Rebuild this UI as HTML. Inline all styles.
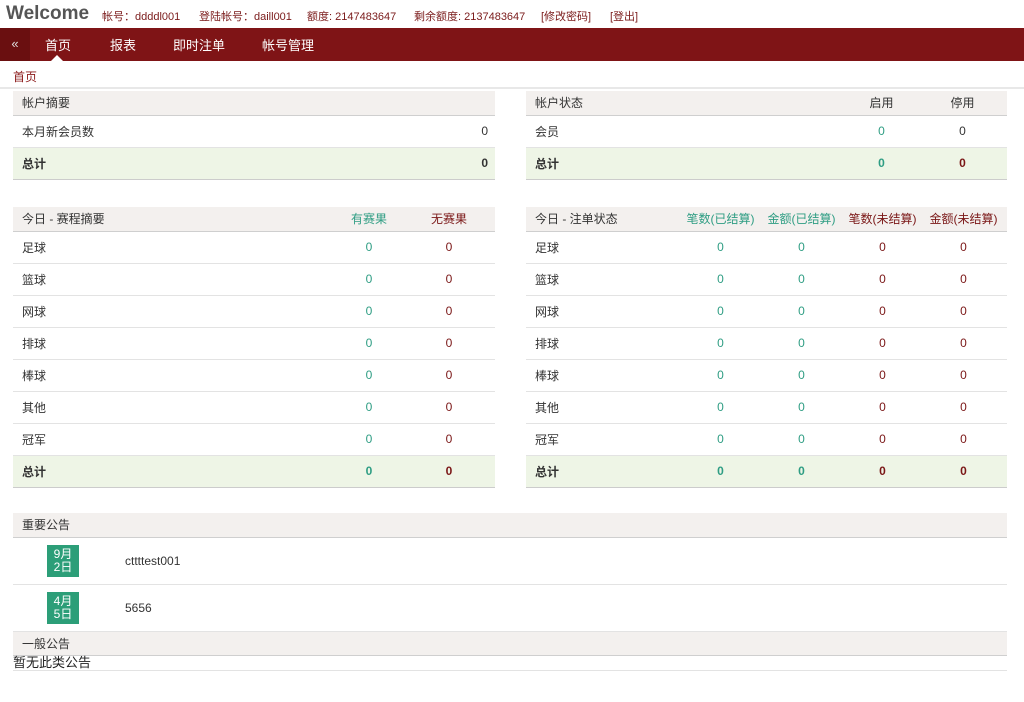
<!DOCTYPE html><html><head><meta charset="utf-8"><style>
*{margin:0;padding:0;box-sizing:border-box}
body{width:1024px;height:702px;background:#fff;font-family:"Liberation Sans","Noto Sans CJK SC",sans-serif;font-size:12px;color:#333;position:relative;overflow:hidden}
.top{position:absolute;left:0;top:0;height:28px;width:1024px}
.top b{position:absolute;left:6px;top:3px;font-size:19px;color:#555}
.top span{position:absolute;top:8px;font-size:11px;color:#7a1a1a}
.nav{position:absolute;left:0;top:28px;width:1024px;height:33px;background:#7f1416}
.nav .bk{position:absolute;left:0;top:0;width:30px;height:33px;background:#6a0f10;color:#ddd;text-align:center;line-height:31px;font-size:13px}
.nav span{position:absolute;top:7px;color:#fff;font-size:13px}
.nav .tri{position:absolute;left:51px;top:27px;border:6px solid transparent;border-bottom-color:#fff;border-top:0}
.bc{position:absolute;left:13px;top:68px;color:#8b1a1a;font-size:12px}
.bcl{position:absolute;left:0;top:87px;width:1024px;height:2px;background:#e8e8e8}
table{position:absolute;border-collapse:collapse;table-layout:fixed}
td{height:32px;border-bottom:1px solid #e3e3e3;padding:0;font-size:12px;color:#333}
td:first-child{padding-left:9px}
tr.h td{height:24px;background:#f3f0ee;border-bottom:1px solid #cfcfcf}
tr.t td{background:#eef5e6;font-weight:bold;border-bottom:1px solid #ccc}
.c{text-align:center}.g{color:#2e9d83}.r{color:#7a1616}
.rt{text-align:right;padding-right:7px}
.dt{display:inline-block;width:32px;height:32px;background:#2c9e78;color:#fff;font-size:12px;line-height:13px;text-align:center;padding-top:3px}
</style></head><body>
<div class="top"><b>Welcome</b>
<span style="left:102px">帐号：ddddl001</span>
<span style="left:199px">登陆帐号：daill001</span>
<span style="left:307px">额度: 2147483647</span>
<span style="left:414px">剩余额度: 2137483647</span>
<span style="left:541px">[修改密码]</span>
<span style="left:610px">[登出]</span></div>
<div class="nav"><div class="bk">«</div><span style="left:45px">首页</span><span style="left:110px">报表</span><span style="left:173px">即时注单</span><span style="left:262px">帐号管理</span><div class="tri"></div></div>
<div class="bc">首页</div><div class="bcl"></div>

<table style="left:13px;top:91px;width:482px"><col style="width:400px"><col>
<tr class="h"><td>帐户摘要</td><td></td></tr>
<tr><td>本月新会员数</td><td class="rt">0</td></tr>
<tr class="t"><td>总计</td><td class="rt">0</td></tr></table>

<table style="left:526px;top:91px;width:481px"><col style="width:315px"><col style="width:81px"><col style="width:81px"><col>
<tr class="h"><td>帐户状态</td><td class="c">启用</td><td class="c">停用</td><td></td></tr>
<tr><td>会员</td><td class="c g">0</td><td class="c">0</td><td></td></tr>
<tr class="t"><td>总计</td><td class="c g">0</td><td class="c r">0</td><td></td></tr></table>

<table style="left:13px;top:207px;width:482px"><col style="width:316px"><col style="width:80px"><col style="width:80px"><col>
<tr class="h"><td>今日 - 赛程摘要</td><td class="c g">有赛果</td><td class="c r">无赛果</td><td></td></tr>
<tr><td>足球</td><td class="c g">0</td><td class="c r">0</td><td></td></tr>
<tr><td>篮球</td><td class="c g">0</td><td class="c r">0</td><td></td></tr>
<tr><td>网球</td><td class="c g">0</td><td class="c r">0</td><td></td></tr>
<tr><td>排球</td><td class="c g">0</td><td class="c r">0</td><td></td></tr>
<tr><td>棒球</td><td class="c g">0</td><td class="c r">0</td><td></td></tr>
<tr><td>其他</td><td class="c g">0</td><td class="c r">0</td><td></td></tr>
<tr><td>冠军</td><td class="c g">0</td><td class="c r">0</td><td></td></tr>
<tr class="t"><td>总计</td><td class="c g">0</td><td class="c r">0</td><td></td></tr></table>

<table style="left:526px;top:207px;width:481px"><col style="width:154px"><col style="width:81px"><col style="width:81px"><col style="width:81px"><col style="width:81px"><col>
<tr class="h"><td>今日 - 注单状态</td><td class="c g">笔数(已结算)</td><td class="c g">金额(已结算)</td><td class="c r">笔数(未结算)</td><td class="c r">金额(未结算)</td><td></td></tr>
<tr><td>足球</td><td class="c g">0</td><td class="c g">0</td><td class="c r">0</td><td class="c r">0</td><td></td></tr>
<tr><td>篮球</td><td class="c g">0</td><td class="c g">0</td><td class="c r">0</td><td class="c r">0</td><td></td></tr>
<tr><td>网球</td><td class="c g">0</td><td class="c g">0</td><td class="c r">0</td><td class="c r">0</td><td></td></tr>
<tr><td>排球</td><td class="c g">0</td><td class="c g">0</td><td class="c r">0</td><td class="c r">0</td><td></td></tr>
<tr><td>棒球</td><td class="c g">0</td><td class="c g">0</td><td class="c r">0</td><td class="c r">0</td><td></td></tr>
<tr><td>其他</td><td class="c g">0</td><td class="c g">0</td><td class="c r">0</td><td class="c r">0</td><td></td></tr>
<tr><td>冠军</td><td class="c g">0</td><td class="c g">0</td><td class="c r">0</td><td class="c r">0</td><td></td></tr>
<tr class="t"><td>总计</td><td class="c g">0</td><td class="c g">0</td><td class="c r">0</td><td class="c r">0</td><td></td></tr></table>

<table style="left:13px;top:513px;width:994px"><col style="width:112px"><col>
<tr class="h"><td colspan="2">重要公告</td></tr>
<tr><td style="height:47px;padding-left:34px"><span class="dt">9月<br>2日</span></td><td style="font-size:12px">cttttest001</td></tr>
<tr><td style="height:47px;padding-left:34px"><span class="dt">4月<br>5日</span></td><td>5656</td></tr>
<tr class="h"><td colspan="2">一般公告</td></tr>
<tr><td colspan="2" style="height:15px;padding-left:0;font-size:13px;line-height:14px;color:#222;vertical-align:top">暂无此类公告</td></tr></table>
</body></html>
